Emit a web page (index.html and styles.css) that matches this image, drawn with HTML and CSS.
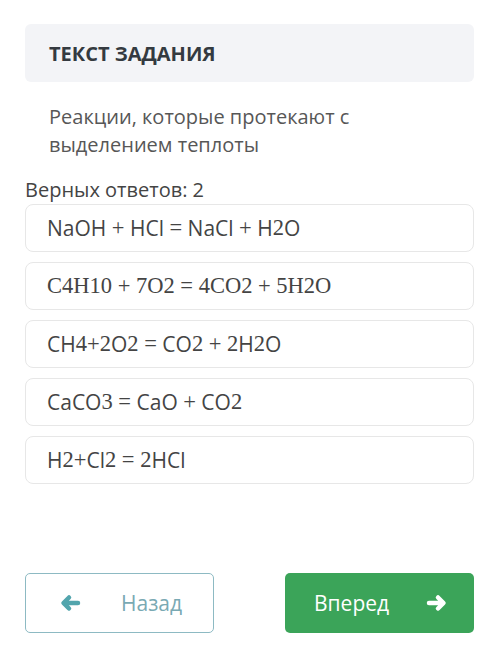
FILE: index.html
```html
<!DOCTYPE html>
<html lang="ru">
  <head>
    <meta charset="UTF-8" />
    <meta name="viewport" content="width=device-width, initial-scale=1.0" />
    <title>Текст задания</title>
    <link rel="stylesheet" href="styles.css">
  </head>
  <body>
    <div class="page">
      <div class="task-header">
        <h2>ТЕКСТ ЗАДАНИЯ</h2>
      </div>

      <p class="question">Реакции, которые протекают с<br />выделением теплоты</p>

      <div class="answers-count">Верных ответов: 2</div>

      <div class="answers">
        <div class="answer">NaOH <span class="m">+</span> HCl <span class="m">=</span> NaCl <span class="m">+</span> H<span class="m">2</span>O</div>
        <div class="answer"><span class="m">C4H10 + 7O2 = 4CO2 + 5H2O</span></div>
        <div class="answer">CH<span class="m">4+2</span>O<span class="m">2 =</span> CO<span class="m">2 + 2</span>H<span class="m">2</span>O</div>
        <div class="answer">CaCO<span class="m">3 =</span> CaO <span class="m">+</span> CO<span class="m">2</span></div>
        <div class="answer">H<span class="m">2+</span>Cl<span class="m">2 = 2</span>HCl</div>
      </div>

      <div class="nav-buttons">
        <button class="btn btn-back">
          <svg width="22" height="18" viewBox="0 0 22 18">
            <path d="M19 9 H5 M10 3.5 L4.5 9 L10 14.5" fill="none" stroke="#52a5ad" stroke-width="4.5" stroke-linecap="round" stroke-linejoin="round" />
          </svg>
          <span>Назад</span>
        </button>
        <button class="btn btn-next">
          <span>Вперед</span>
          <svg width="22" height="18" viewBox="0 0 22 18">
            <path d="M3 9 H17 M12 3.5 L17.5 9 L12 14.5" fill="none" stroke="#ffffff" stroke-width="4.5" stroke-linecap="round" stroke-linejoin="round" />
          </svg>
        </button>
      </div>
    </div>
  </body>
</html>
```

FILE: styles.css
```css
body {
  font-family: "Open Sans", "Noto Sans", sans-serif;
  background-color: #ffffff;
  margin: 0;
  padding: 0;
}

.page {
  padding: 24px 26px 0 25px;
}

.task-header {
  background-color: #f3f4f7;
  border-radius: 6px;
  height: 58px;
  display: flex;
  align-items: center;
  padding: 0 24px;
}

.task-header h2 {
  margin: 0;
  font-size: 20px;
  font-weight: 700;
  color: #343a40;
}

.question {
  margin: 21px 0 0 0;
  padding-left: 24px;
  font-size: 20px;
  line-height: 28px;
  color: #575757;
}

.answers-count {
  margin-top: 18px;
  font-size: 20px;
  line-height: 26px;
  color: #444444;
}

.answers {
  display: flex;
  flex-direction: column;
  gap: 10px;
  margin-top: 1px;
}

.answer {
  height: 48px;
  box-sizing: border-box;
  border: 1.5px solid #e7e7e7;
  border-radius: 8px;
  display: flex;
  align-items: center;
  padding-left: 21px;
  font-size: 21px;
  color: #444444;
  white-space: pre;
}

.answer .m {
  font-family: "Liberation Serif", "DejaVu Serif", serif;
  font-size: 22.5px;
}

.nav-buttons {
  display: flex;
  justify-content: space-between;
  margin-top: 89px;
}

.btn {
  width: 189px;
  height: 60px;
  box-sizing: border-box;
  border-radius: 5px;
  font-family: "Open Sans", "Noto Sans", sans-serif;
  font-size: 21px;
  display: flex;
  align-items: center;
  cursor: pointer;
}

.btn-back {
  background-color: #ffffff;
  border: 1.5px solid #8dbac3;
  color: #79a9b3;
  padding: 0 0 0 33px;
  gap: 40px;
}

.btn-next {
  background-color: #3ba459;
  border: none;
  color: #ffffff;
  padding: 0 0 0 29px;
  gap: 37px;
}
```
